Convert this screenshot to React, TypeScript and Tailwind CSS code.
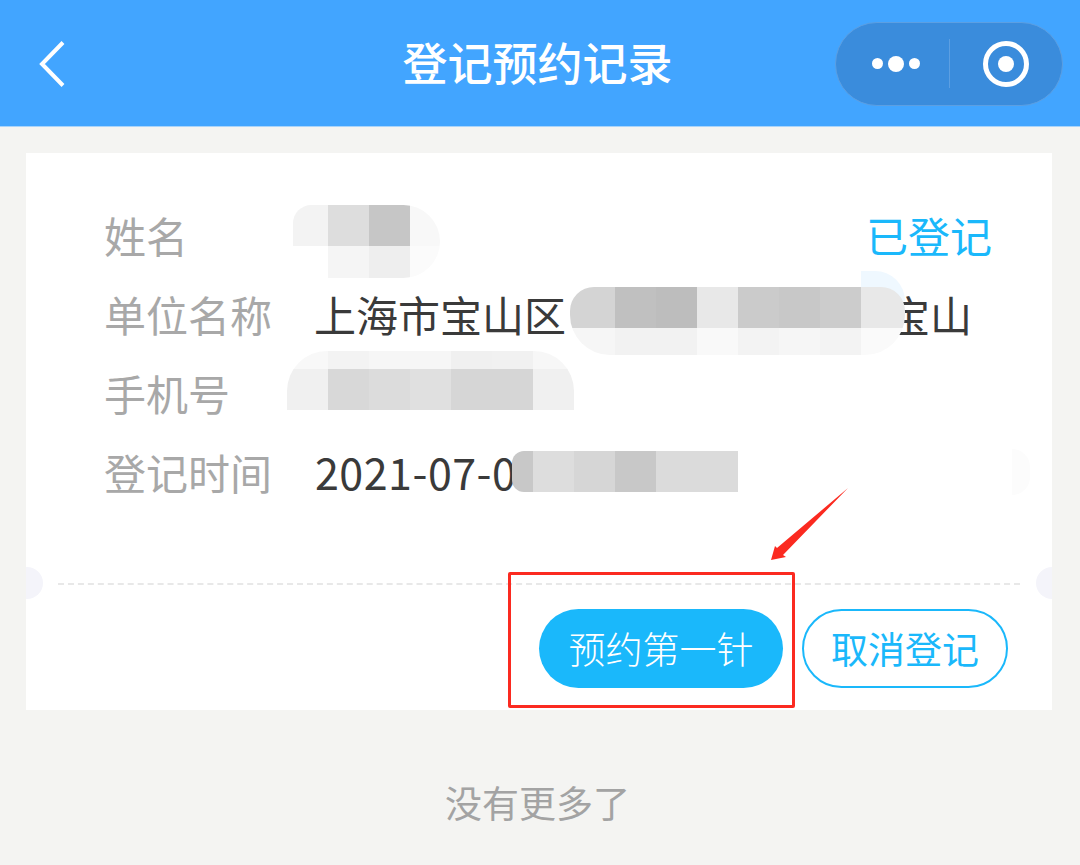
const font = { fontFamily: '"Noto Sans CJK SC", "Noto Sans", sans-serif' };

type Tile = [number, string];

// one row of the blurred mosaic
const MosaicRow = ({ h, tiles }: { h: number; tiles: Tile[] }) => (
  <div className="flex" style={{ height: h }}>
    {tiles.map(([w, color], i) => (
      <div key={i} style={{ width: w, background: color }} />
    ))}
  </div>
);

const Row = ({ label, children }: { label: string; children?: React.ReactNode }) => (
  <div className="flex h-[79px] items-center pl-[78px] pr-[60px]">
    <span className="w-[211px] shrink-0 text-[42px] leading-none text-[#a8a8a8]">{label}</span>
    {children}
  </div>
);

const App = () => {
  return (
    <div className="relative h-[865px] w-[1080px] overflow-hidden bg-[#f4f4f2]" style={font}>
      <header className="grid h-[127px] grid-cols-[1fr_auto_1fr] items-center border-b border-[#a9d4fb] bg-[#42a5ff] pl-[38px] pr-[17px]">
        <svg width="30" height="48" viewBox="0 0 30 48" fill="none" className="mt-[1px]">
          <path d="M25 2.5 L4 24 L25 45.5" stroke="#fff" strokeWidth="4" />
        </svg>
        <h1 className="mb-[3px] mr-[26px] text-[45px] font-medium leading-none text-white">登记预约记录</h1>
        <div className="mt-[1px] flex h-[84px] w-[228px] items-center justify-self-end rounded-full border border-[#5c9fe2] bg-[#3a8cdc]">
          <div className="flex h-[49px] w-[114px] items-center justify-end gap-[5px] border-r border-[#5c9fe2] pr-[29px]">
            <span className="h-[11px] w-[11px] rounded-full bg-white" />
            <span className="h-[16px] w-[16px] rounded-full bg-white" />
            <span className="h-[11px] w-[11px] rounded-full bg-white" />
          </div>
          <div className="flex flex-1 items-center justify-center pr-[1px]">
            <svg width="48" height="48" viewBox="0 0 48 48">
              <circle cx="24" cy="24" r="20.5" fill="none" stroke="#fff" strokeWidth="5" />
              <circle cx="24" cy="24" r="8" fill="#fff" />
            </svg>
          </div>
        </div>
      </header>

      <main className="relative ml-[26px] mt-[26px] h-[557px] w-[1026px] overflow-hidden bg-white pt-[42px]">
        <Row label="姓名">
          <span className="ml-auto text-[42px] leading-none text-[#1ab8fb]">已登记</span>
        </Row>
        <Row label="单位名称">
          <span className="-ml-[1px] whitespace-nowrap text-[42px] leading-none text-[#3a3a3a]">上海市宝山区</span>
          <span className="ml-[322px] whitespace-nowrap text-[42px] leading-none text-[#3a3a3a]">宝山</span>
        </Row>
        <Row label="手机号" />
        <Row label="登记时间">
          <span className="text-[43px] leading-none tracking-[0.5px] text-[#3a3a3a]">2021-07-0</span>
        </Row>

        <div className="mx-[32px] mt-[72px] border-t-2 border-dashed border-[#e8e8e8]" />
        <div className="absolute left-[-16px] top-[414px] h-[32px] w-[33px] rounded-full bg-[#f4f4fa]" />
        <div className="absolute right-[-16px] top-[414px] h-[32px] w-[32px] rounded-full bg-[#f4f4fa]" />

        <div className="mt-[24px] flex justify-end gap-[19px] pr-[44px]">
          <button className="h-[79px] w-[244px] rounded-full bg-[#1ab8fb] text-[37px] font-light leading-none text-white">预约第一针</button>
          <button className="h-[79px] w-[206px] rounded-full border-2 border-[#1ab8fb] bg-white text-[37px] leading-none text-[#1ab8fb]">取消登记</button>
        </div>
      </main>

      <p className="mt-[68px] pr-[5px] text-center text-[37px] leading-[48px] text-[#a3a3a3]">没有更多了</p>

      {/* blurred-out personal data lies over the card */}
      <div className="absolute left-[293px] top-[205px] overflow-hidden rounded-tr-[40px] rounded-br-[40px] rounded-bl-[30px] rounded-tl-[20px]">
        <MosaicRow h={41} tiles={[[35, "#f3f3f3"], [41, "#dddddd"], [41, "#c6c6c6"], [30, "#f8f8f8"]]} />
        <MosaicRow h={32} tiles={[[35, "#ffffff"], [41, "#f5f5f5"], [41, "#eeeeee"], [30, "#fbfbfb"]]} />
      </div>
      <div className="absolute left-[861px] top-[271px] h-[30px] w-[44px] rounded-tr-[36px] bg-[#eff8ff]" />
      <div className="absolute left-[570px] top-[287px] overflow-hidden rounded-tl-[24px] rounded-bl-[40px] rounded-tr-[24px] rounded-br-[40px]">
        <MosaicRow h={41} tiles={[[45, "#d4d4d4"], [41, "#c0c0c0"], [41, "#bdbdbd"], [41, "#e8e8e8"], [41, "#cbcbcb"], [41, "#c8c8c8"], [41, "#cccccc"], [44, "#e8e8e8"]]} />
        <MosaicRow h={27} tiles={[[45, "#f6f6f6"], [41, "#f2f2f2"], [41, "#f2f2f2"], [41, "#f9f9f9"], [41, "#f3f3f3"], [41, "#f6f6f6"], [41, "#f3f3f3"], [44, "#fafafa"]]} />
      </div>
      <div className="absolute left-[287px] top-[351px] overflow-hidden rounded-tl-[40px] rounded-tr-[40px]">
        <MosaicRow h={18} tiles={[[41, "#f8f8f8"], [41, "#f3f3f3"], [41, "#f6f6f6"], [41, "#f6f6f6"], [41, "#f0f0f0"], [41, "#f1f1f1"], [41, "#f7f7f7"]]} />
        <MosaicRow h={41} tiles={[[41, "#f0f0f0"], [41, "#d8d8d8"], [41, "#dcdcdc"], [41, "#e0e0e0"], [41, "#d6d6d6"], [41, "#d6d6d6"], [41, "#f0f0f0"]]} />
      </div>
      <div className="absolute left-[512px] top-[451px] overflow-hidden rounded-l-[12px]">
        <MosaicRow h={41} tiles={[[21, "#c8c8c8"], [41, "#dddddd"], [41, "#d6d6d6"], [41, "#c8c8c8"], [82, "#dbdbdb"]]} />
      </div>
      <div className="absolute left-[1012px] top-[449px] h-[46px] w-[18px] rounded-r-full bg-[#fcfcfc]" />

      {/* red annotation */}
      <div className="absolute left-[508px] top-[572px] h-[136px] w-[287px] rounded-[2px] border-[3px] border-[#fb2a20]" />
      <svg className="absolute left-[765px] top-[484px]" width="90" height="82" viewBox="0 0 90 82">
        <path d="M83 4 L18 71 L21 73 L6 76 L10 62 L12 64 Z" fill="#fb2a20" />
      </svg>
    </div>
  );
};

export default App;
